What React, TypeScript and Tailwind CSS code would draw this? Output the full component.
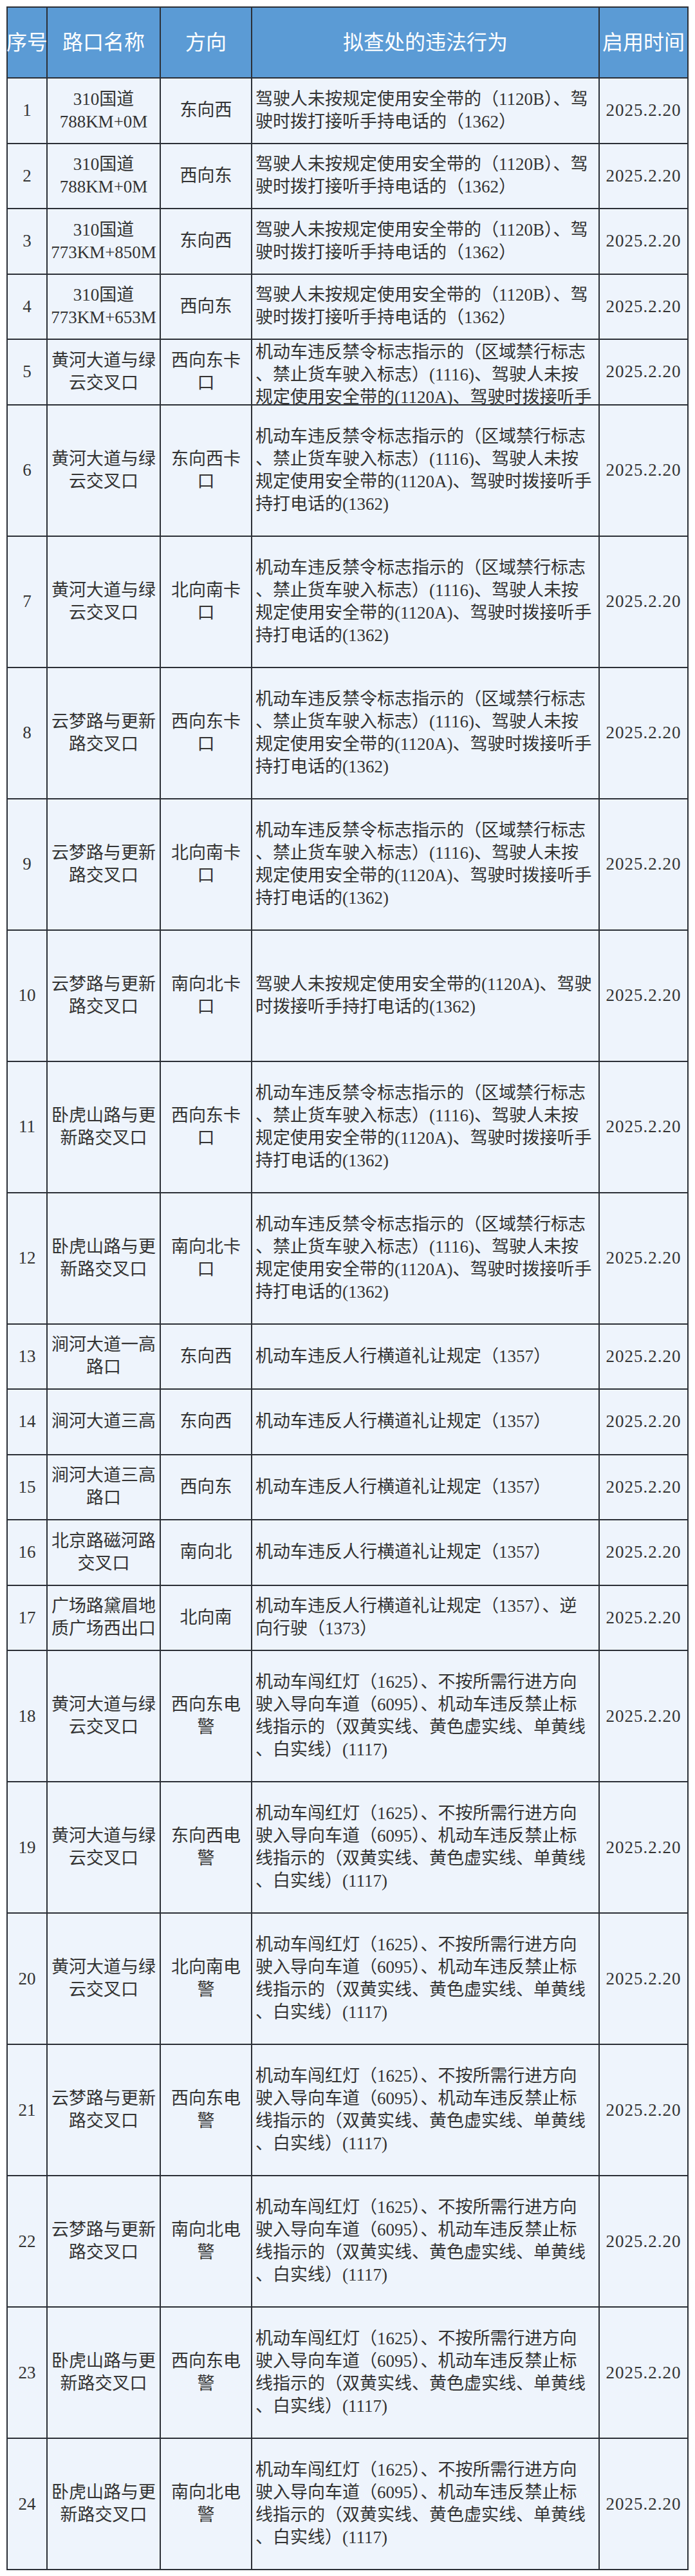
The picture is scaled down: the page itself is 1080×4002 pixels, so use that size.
import React from 'react';

type Row = {
  no: number;
  road: string[];
  dir: string[];
  acts: string[];
  tall: boolean;
  clip?: boolean;
};

// violation texts, broken the same way as the sheet
const SEATBELT_B = ['驾驶人未按规定使用安全带的（1120B）、驾', '驶时拨打接听手持电话的（1362）'];
const BAN_SIGN = [
  '机动车违反禁令标志指示的（区域禁行标志',
  '、禁止货车驶入标志）(1116)、驾驶人未按',
  '规定使用安全带的(1120A)、驾驶时拨接听手',
  '持打电话的(1362)',
];
const SEATBELT_A = ['驾驶人未按规定使用安全带的(1120A)、驾驶', '时拨接听手持打电话的(1362)'];
const CROSSWALK = ['机动车违反人行横道礼让规定（1357）'];
const CROSSWALK_REVERSE = ['机动车违反人行横道礼让规定（1357）、逆', '向行驶（1373）'];
const RED_LIGHT = [
  '机动车闯红灯（1625）、不按所需行进方向',
  '驶入导向车道（6095）、机动车违反禁止标',
  '线指示的（双黄实线、黄色虚实线、单黄线',
  '、白实线）(1117)',
];

const HUANGHE = ['黄河大道与绿', '云交叉口'];
const YUNMENG = ['云梦路与更新', '路交叉口'];
const WOHU = ['卧虎山路与更', '新路交叉口'];

const rows: Row[] = [
  { no: 1, road: ['310国道', '788KM+0M'], dir: ['东向西'], acts: SEATBELT_B, tall: false },
  { no: 2, road: ['310国道', '788KM+0M'], dir: ['西向东'], acts: SEATBELT_B, tall: false },
  { no: 3, road: ['310国道', '773KM+850M'], dir: ['东向西'], acts: SEATBELT_B, tall: false },
  { no: 4, road: ['310国道', '773KM+653M'], dir: ['西向东'], acts: SEATBELT_B, tall: false },
  { no: 5, road: HUANGHE, dir: ['西向东卡', '口'], acts: BAN_SIGN, tall: false, clip: true },
  { no: 6, road: HUANGHE, dir: ['东向西卡', '口'], acts: BAN_SIGN, tall: true },
  { no: 7, road: HUANGHE, dir: ['北向南卡', '口'], acts: BAN_SIGN, tall: true },
  { no: 8, road: YUNMENG, dir: ['西向东卡', '口'], acts: BAN_SIGN, tall: true },
  { no: 9, road: YUNMENG, dir: ['北向南卡', '口'], acts: BAN_SIGN, tall: true },
  { no: 10, road: YUNMENG, dir: ['南向北卡', '口'], acts: SEATBELT_A, tall: true },
  { no: 11, road: WOHU, dir: ['西向东卡', '口'], acts: BAN_SIGN, tall: true },
  { no: 12, road: WOHU, dir: ['南向北卡', '口'], acts: BAN_SIGN, tall: true },
  { no: 13, road: ['涧河大道一高', '路口'], dir: ['东向西'], acts: CROSSWALK, tall: false },
  { no: 14, road: ['涧河大道三高'], dir: ['东向西'], acts: CROSSWALK, tall: false },
  { no: 15, road: ['涧河大道三高', '路口'], dir: ['西向东'], acts: CROSSWALK, tall: false },
  { no: 16, road: ['北京路磁河路', '交叉口'], dir: ['南向北'], acts: CROSSWALK, tall: false },
  { no: 17, road: ['广场路黛眉地', '质广场西出口'], dir: ['北向南'], acts: CROSSWALK_REVERSE, tall: false },
  { no: 18, road: HUANGHE, dir: ['西向东电', '警'], acts: RED_LIGHT, tall: true },
  { no: 19, road: HUANGHE, dir: ['东向西电', '警'], acts: RED_LIGHT, tall: true },
  { no: 20, road: HUANGHE, dir: ['北向南电', '警'], acts: RED_LIGHT, tall: true },
  { no: 21, road: YUNMENG, dir: ['西向东电', '警'], acts: RED_LIGHT, tall: true },
  { no: 22, road: YUNMENG, dir: ['南向北电', '警'], acts: RED_LIGHT, tall: true },
  { no: 23, road: WOHU, dir: ['西向东电', '警'], acts: RED_LIGHT, tall: true },
  { no: 24, road: WOHU, dir: ['南向北电', '警'], acts: RED_LIGHT, tall: true },
];

const GRID = 'grid grid-cols-[62px_176px_142px_540px_138px]';
const CELL = 'border-r-2 border-b-2 border-[#2b2f36] overflow-hidden';

const Lines: React.FC<{ lines: string[] }> = ({ lines }) => (
  <div>
    {lines.map((l, i) => (
      <div key={i} className="whitespace-nowrap">
        {l}
      </div>
    ))}
  </div>
);

const App: React.FC = () => {
  return (
    <div className="w-[1080px] min-h-[4002px] bg-white pt-[10px] pl-[10px] font-['Liberation_Serif','Noto_Sans_CJK_SC',serif]">
      <div className="w-[1060px] border-l-2 border-t-2 border-[#2b2f36]">
        {/* Header */}
        <div className={`${GRID} h-[110px] bg-[#5b9bd5] text-white text-[32px]`}>
          {['序号', '路口名称', '方向', '拟查处的违法行为', '启用时间'].map((h) => (
            <div key={h} className={`${CELL} flex items-center justify-center whitespace-nowrap overflow-visible`}>
              {h}
            </div>
          ))}
        </div>

        {/* Body */}
        {rows.map((r) => (
          <div
            key={r.no}
            className={`${GRID} ${r.tall ? 'h-[204px]' : 'h-[101.5px]'} bg-[#eef4fc] text-[#333] text-[27px] leading-[35px]`}
          >
            <div className={`${CELL} flex items-center justify-center`}>{r.no}</div>
            <div className={`${CELL} flex items-center justify-center text-center`}>
              <Lines lines={r.road} />
            </div>
            <div className={`${CELL} flex items-center justify-center text-center`}>
              <Lines lines={r.dir} />
            </div>
            <div className={`${CELL} flex pl-[5px] ${r.clip ? 'items-start pt-[2px]' : 'items-center'}`}>
              <Lines lines={r.acts} />
            </div>
            <div className={`${CELL} flex items-center justify-center tracking-[1px]`}>2025.2.20</div>
          </div>
        ))}
      </div>
    </div>
  );
};

export default App;
